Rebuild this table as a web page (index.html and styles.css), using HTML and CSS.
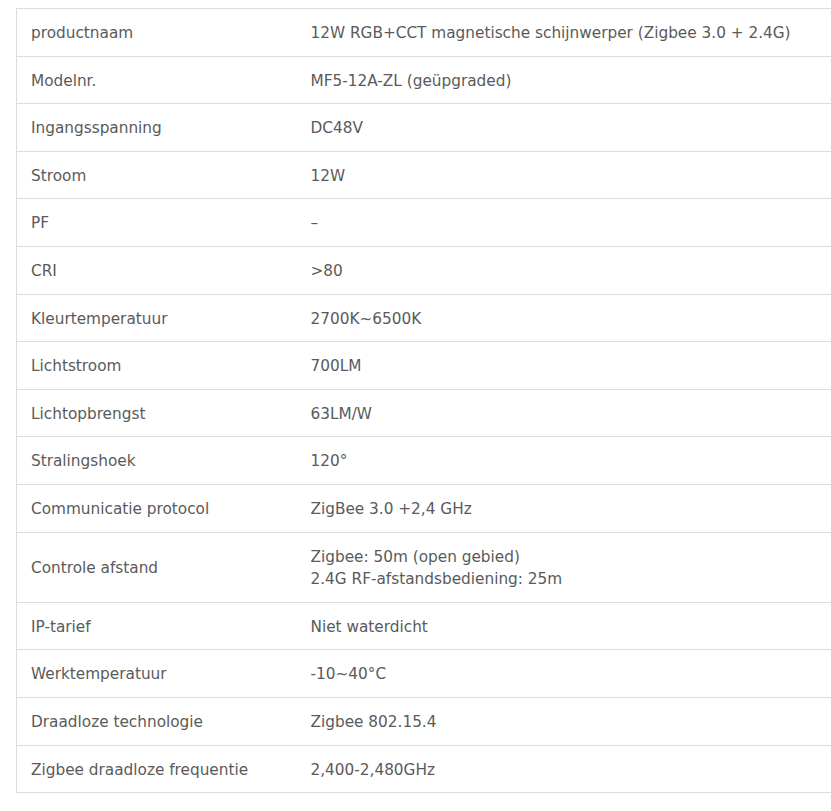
FILE: index.html
```html
<!DOCTYPE html>
<html lang="nl">
<head>
<meta charset="utf-8">
<title>Specificaties</title>
<link rel="stylesheet" href="styles.css">
</head>
<body>
<table class="specs">
  <colgroup><col class="col-label"><col class="col-value"></colgroup>
  <tbody>
    <tr><td>productnaam</td><td>12W RGB+CCT magnetische schijnwerper (Zigbee 3.0 + 2.4G)</td></tr>
    <tr><td>Modelnr.</td><td>MF5-12A-ZL (geüpgraded)</td></tr>
    <tr><td>Ingangsspanning</td><td>DC48V</td></tr>
    <tr><td>Stroom</td><td>12W</td></tr>
    <tr><td>PF</td><td>–</td></tr>
    <tr><td>CRI</td><td>&gt;80</td></tr>
    <tr><td>Kleurtemperatuur</td><td>2700K~6500K</td></tr>
    <tr><td>Lichtstroom</td><td>700LM</td></tr>
    <tr><td>Lichtopbrengst</td><td>63LM/W</td></tr>
    <tr><td>Stralingshoek</td><td>120°</td></tr>
    <tr><td>Communicatie protocol</td><td>ZigBee 3.0 +2,4 GHz</td></tr>
    <tr><td>Controle afstand</td><td>Zigbee: 50m (open gebied)<br>2.4G RF-afstandsbediening: 25m</td></tr>
    <tr><td>IP-tarief</td><td>Niet waterdicht</td></tr>
    <tr><td>Werktemperatuur</td><td>-10~40°C</td></tr>
    <tr><td>Draadloze technologie</td><td>Zigbee 802.15.4</td></tr>
    <tr><td>Zigbee draadloze frequentie</td><td>2,400-2,480GHz</td></tr>
  </tbody>
</table>
</body>
</html>
```
FILE: styles.css
```css
html, body {
  overflow: hidden;
}
body {
  margin: 8px 0 0 16px;
  background: #ffffff;
  font-family: "DejaVu Sans", "Open Sans", sans-serif;
  font-size: 15.3px;
  color: #5a5a5a;
}
.specs {
  width: 840px;
  border-collapse: collapse;
  border: 1px solid #dddddd;
}
.col-label { width: 280px; }
.specs td {
  border-top: 1px solid #dddddd;
  border-bottom: 1px solid #dddddd;
  padding: 13px 14px 11px;
  line-height: 22.6px;
  vertical-align: middle;
  text-align: left;
}
```
